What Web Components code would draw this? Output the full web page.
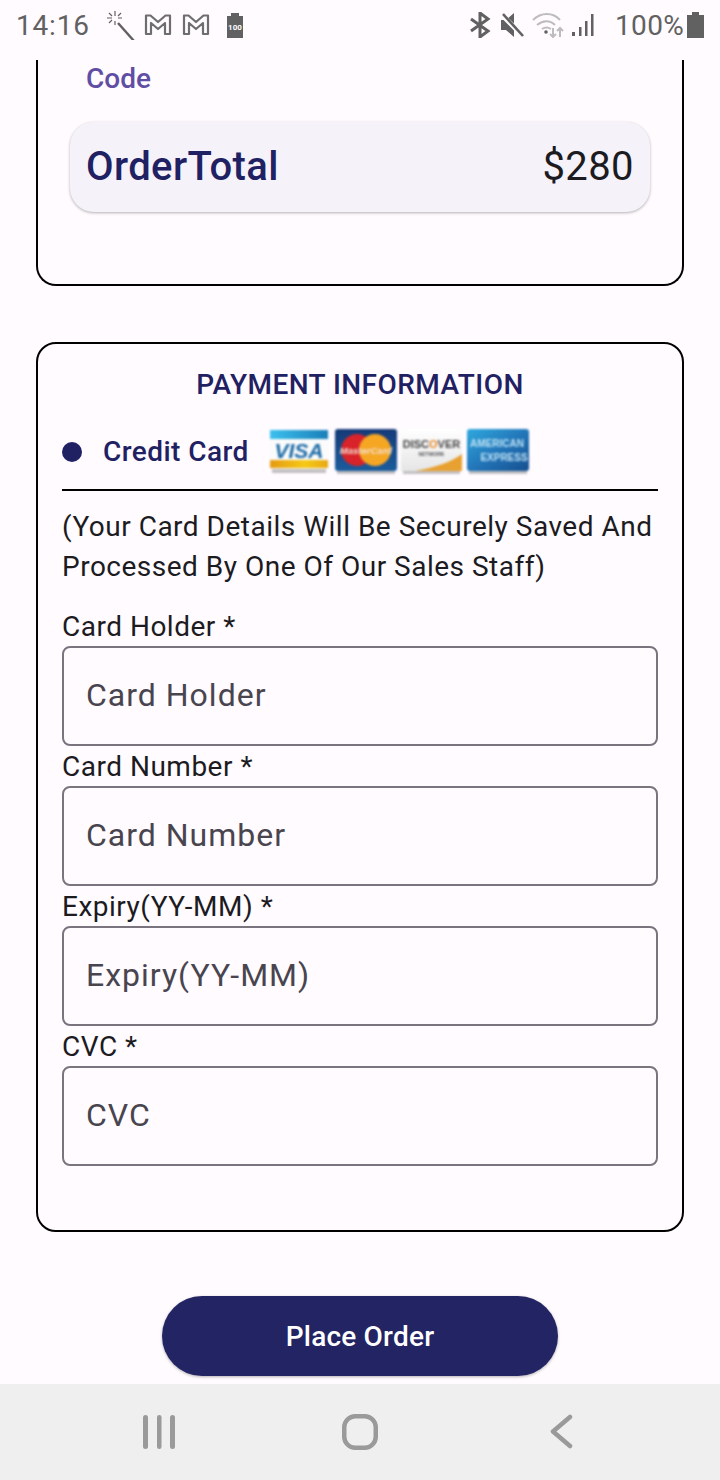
<!DOCTYPE html>
<html>
<head>
<meta charset="utf-8">
<style>
  html, body { margin: 0; padding: 0; }
  body { width: 720px; height: 1480px; overflow: hidden; background: #fffbff; font-family: Roboto, sans-serif; display: flex; flex-direction: column; }
</style>
</head>
<body>
<status-bar></status-bar>
<checkout-page>
  <section-card slot="top" class="cut">
    <span style="display:block;margin:1px 0 0 16px;font-size:28px;font-weight:500;line-height:36px;color:#5f4ea3">Code</span>
    <order-total style="margin-top:25px"></order-total>
  </section-card>
  <payment-card slot="payment"></payment-card>
  <place-button slot="action">Place Order</place-button>
</checkout-page>
<nav-bar></nav-bar>

<script>
class StatusBar extends HTMLElement {
  connectedCallback() {
    this.attachShadow({ mode: 'open' }).innerHTML = `
      <style>
        :host { display: flex; height: 60px; flex: none; align-items: center; padding: 0 16px 10px 16px; box-sizing: border-box; color: #616161; font: 400 28px Roboto, sans-serif; }
        .time { letter-spacing: .8px; width: 88px; }
        .left, .right { display: flex; align-items: center; }
        .spacer { flex: 1; }
        svg { display: block; }
      </style>
      <span class="time">14:16</span>
      <div class="left">
        <svg width="30" height="30" viewBox="0 0 30 30" style="margin-left:1px" fill="none" stroke="#616161">
          <path d="M13 13 L29 31" stroke-width="2.4"/>
          <path d="M10 1v5M10 11v4M2 8h5M13 8h4M4 3l3 3M16 3l-3 3M4 13l3-3" stroke-width="1.2"/>
        </svg>
        <svg width="28" height="24" viewBox="0 0 28 24" style="margin-left:9px" fill="none" stroke="#6e6e6e" stroke-width="2.2" stroke-linejoin="round">
          <path d="M2 2.5h4.5L14 9l7.500-6.500H26V21h-5V10l-7 6-7-6v11H2z"/>
        </svg>
        <svg width="28" height="24" viewBox="0 0 28 24" style="margin-left:10px" fill="none" stroke="#6e6e6e" stroke-width="2.2" stroke-linejoin="round">
          <path d="M2 2.5h4.500L14 9l7.500-6.500H26V21h-5V10l-7 6-7-6v11H2z"/>
        </svg>
        <svg width="18" height="26" viewBox="0 0 18 26" style="margin-left:16px">
          <path d="M1 4h4V1h8v3h4v22H1z" fill="#616161"/>
          <text x="9" y="18" text-anchor="middle" font-size="8" font-weight="700" font-family="Roboto" fill="#fff">100</text>
        </svg>
      </div>
      <div class="spacer"></div>
      <div class="right">
        <svg width="22" height="26" viewBox="0 0 22 26" fill="none" stroke="#616161" stroke-width="3">
          <path d="M2 7l17 12-8 6V1l8 6L2 19"/>
        </svg>
        <svg width="24" height="26" viewBox="0 0 24 26" style="margin-left:9px">
          <path d="M1 8h5l8-7v24l-8-7H1z" fill="#616161"/>
          <path d="M2 3l21 21" stroke="#fffbff" stroke-width="5"/>
          <path d="M3 2l20 22" stroke="#616161" stroke-width="2.600"/>
        </svg>
        <svg width="32" height="26" viewBox="0 0 32 26" style="margin-left:8px" fill="none" stroke="#bdbdbd" stroke-width="2">
          <path d="M1 8c8-8 20-8 27 0M5 13c6-5 13-5 18 0M10 17c3-2 6-2 9 0"/>
          <circle cx="14" cy="20" r="1.800" fill="#616161" stroke="none"/>
          <path d="M21 16v9M18 22l3 3 3-3" stroke-width="2"/>
          <path d="M28 25v-9M25 19l3-3 3 3" stroke-width="2"/>
        </svg>
        <svg width="24" height="24" viewBox="0 0 24 24" style="margin-left:7px" fill="#616161">
          <rect x="1" y="19" width="3" height="4"/><rect x="8" y="14" width="2.500" height="9"/><rect x="14" y="8" width="2.500" height="15"/><rect x="20" y="1" width="2.500" height="22"/>
        </svg>
        <span style="margin-left:20px;letter-spacing:.3px">100%</span>
        <svg width="17" height="26" viewBox="0 0 17 26" style="margin-left:3px" fill="#616161">
          <path d="M0 3h5V0h7v3h5v23H0z"/>
        </svg>
      </div>`;
  }
}
customElements.define('status-bar', StatusBar);

class CheckoutPage extends HTMLElement {
  connectedCallback() {
    this.attachShadow({ mode: 'open' }).innerHTML = `
      <style>
        :host { display: flex; flex-direction: column; align-items: center; height: 1324px; flex: none; box-sizing: border-box; overflow: hidden; }
        .gap1 { height: 56px; flex: none; }
        .gap2 { height: 64px; flex: none; }
      </style>
      <slot name="top"></slot>
      <div class="gap1"></div>
      <slot name="payment"></slot>
      <div class="gap2"></div>
      <slot name="action"></slot>`;
  }
}
customElements.define('checkout-page', CheckoutPage);

class SectionCard extends HTMLElement {
  connectedCallback() {
    this.attachShadow({ mode: 'open' }).innerHTML = `
      <style>
        :host { display: block; width: 648px; box-sizing: border-box; border: 2px solid #000; border-radius: 20px; flex: none; }
        :host(.cut) { border-top: 0; border-radius: 0 0 20px 20px; height: 226px; padding: 0 32px; }
      </style>
      <slot></slot>`;
  }
}
customElements.define('section-card', SectionCard);

class OrderTotal extends HTMLElement {
  connectedCallback() {
    this.attachShadow({ mode: 'open' }).innerHTML = `
      <style>
        :host { display: flex; justify-content: space-between; align-items: center; height: 90px; box-sizing: border-box; padding: 0 16px 2px; background: #f5f2f9; border-radius: 24px; box-shadow: 0 1px 3px rgba(0,0,0,.3); font: 40px Roboto, sans-serif; letter-spacing: .4px; }
        .name { font-weight: 500; color: #1f2163; }
        .price { color: #1c1b1f; }
      </style>
      <span class="name">OrderTotal</span><span class="price">$280</span>`;
  }
}
customElements.define('order-total', OrderTotal);

class CardLogos extends HTMLElement {
  connectedCallback() {
    this.attachShadow({ mode: 'open' }).innerHTML = `
      <style>
        :host { display: flex; gap: 4px; margin-left: 20px; }
        svg { display: block; width: 62px; height: 46px; filter: blur(.8px); }
        text { font-family: "Liberation Sans", sans-serif; }
      </style>
      <svg viewBox="0 0 62 46">
        <defs>
          <linearGradient id="vb" x1="0" x2="1"><stop offset="0" stop-color="#3cc0ee"/><stop offset="1" stop-color="#1a7fb8"/></linearGradient>
          <linearGradient id="vo" x1="0" x2="1"><stop offset="0" stop-color="#e59a14"/><stop offset=".6" stop-color="#f6c915"/><stop offset="1" stop-color="#e8a814"/></linearGradient>
        </defs>
        <rect x="1" y="1" width="58" height="38" fill="#fbfbfb"/>
        <rect x="1" y="1" width="58" height="9" fill="url(#vb)"/>
        <rect x="1" y="31" width="58" height="8" fill="url(#vo)"/>
        <rect x="3" y="40" width="54" height="4" fill="#999" opacity=".6"/>
        <text x="30" y="29" text-anchor="middle" font-size="21" font-weight="700" font-style="italic" fill="#1a6aa6">VISA</text>
      </svg>
      <svg viewBox="0 0 62 46">
        <defs><linearGradient id="mb" x2="0" y2="1"><stop offset="0" stop-color="#153a78"/><stop offset="1" stop-color="#1c5c9c"/></linearGradient></defs>
        <rect x="0" y="0" width="62" height="42" rx="3" fill="url(#mb)"/>
        <rect x="2" y="42" width="58" height="3" fill="#999" opacity=".6"/>
        <circle cx="22" cy="21" r="16" fill="#d8232a"/>
        <circle cx="40" cy="21" r="16" fill="#f5a623"/>
        <text x="31" y="24.500" text-anchor="middle" font-size="9.500" font-weight="700" font-style="italic" fill="#f5e0d0">MasterCard</text>
      </svg>
      <svg viewBox="0 0 62 46">
        <defs><linearGradient id="dg" x2="0" y2="1"><stop offset="0" stop-color="#fff"/><stop offset="1" stop-color="#e6e6e6"/></linearGradient></defs>
        <rect x="0" y="0" width="61" height="42" fill="url(#dg)"/>
        <path d="M14 42 C36 38 52 32 61 25 V42Z" fill="#e8a030"/>
        <rect x="2" y="42" width="57" height="3" fill="#999" opacity=".6"/>
        <text x="30.500" y="19" text-anchor="middle" font-size="11" font-weight="700" fill="#444">DISC<tspan fill="#e8872a">O</tspan>VER</text>
        <text x="30.500" y="27" text-anchor="middle" font-size="5" font-weight="700" fill="#555">NETWORK</text>
      </svg>
      <svg viewBox="0 0 62 46">
        <defs><linearGradient id="ab" x1="0" y1="0" x2="1" y2="1"><stop offset="0" stop-color="#2fa9dd"/><stop offset=".5" stop-color="#2377ba"/><stop offset="1" stop-color="#164f8f"/></linearGradient></defs>
        <rect x="0" y="0" width="62" height="42" rx="3" fill="url(#ab)"/>
        <rect x="2" y="42" width="58" height="3" fill="#999" opacity=".6"/>
        <text x="30" y="18" text-anchor="middle" font-size="10" font-weight="700" fill="#bfe3f5">AMERICAN</text>
        <text x="37" y="32" text-anchor="middle" font-size="10" font-weight="700" fill="#bfe3f5">EXPRESS</text>
      </svg>`;
  }
}
customElements.define('card-logos', CardLogos);

class FormField extends HTMLElement {
  connectedCallback() {
    var label = this.getAttribute('label');
    this.attachShadow({ mode: 'open' }).innerHTML = `
      <style>
        :host { display: block; }
        .label { font-size: 28px; height: 40px; line-height: 42px; color: #1c1b1f; letter-spacing: .5px; }
        .box { height: 100px; box-sizing: border-box; border: 2px solid #79747e; border-radius: 8px; padding: 0 22px 2px; display: flex; align-items: center; font-size: 32px; letter-spacing: 1px; color: #49454f; }
      </style>
      <div class="label">${label} *</div>
      <div class="box">${label}</div>`;
  }
}
customElements.define('form-field', FormField);

class PaymentCard extends HTMLElement {
  connectedCallback() {
    this.attachShadow({ mode: 'open' }).innerHTML = `
      <style>
        :host { display: block; width: 648px; height: 890px; box-sizing: border-box; border: 2px solid #000; border-radius: 20px; padding: 0 24px; flex: none; color: #1c1b1f; }
        h2 { margin: 0; padding-top: 21px; text-align: center; font-size: 28px; line-height: 40px; font-weight: 500; letter-spacing: .45px; color: #1f2163; }
        .method { display: flex; align-items: center; height: 46px; margin-top: 24px; }
        .dot { width: 20px; height: 20px; border-radius: 50%; background: #1f2163; flex: none; }
        .name { margin: 0 0 2px 21px; font-size: 28px; font-weight: 500; letter-spacing: .45px; color: #1f2163; }
        hr { margin: 14px 0 0; border: 0; height: 2px; background: #000; }
        p { margin: 16px 0 19px; font-size: 28px; line-height: 40px; letter-spacing: .5px; }
      </style>
      <h2>PAYMENT INFORMATION</h2>
      <div class="method"><span class="dot"></span><span class="name">Credit Card</span><card-logos></card-logos></div>
      <hr>
      <p>(Your Card Details Will Be Securely Saved And Processed By One Of Our Sales Staff)</p>
      <form-field label="Card Holder"></form-field>
      <form-field label="Card Number"></form-field>
      <form-field label="Expiry(YY-MM)"></form-field>
      <form-field label="CVC"></form-field>`;
  }
}
customElements.define('payment-card', PaymentCard);

class PlaceButton extends HTMLElement {
  connectedCallback() {
    this.attachShadow({ mode: 'open' }).innerHTML = `
      <style>
        :host { display: flex; width: 396px; height: 80px; flex: none; align-items: center; justify-content: center; border-radius: 40px; background: #232463; color: #fff; font: 500 28px Roboto, sans-serif; letter-spacing: .2px; box-shadow: 0 1px 3px rgba(0,0,0,.3); }
      </style>
      <slot></slot>`;
  }
}
customElements.define('place-button', PlaceButton);

class NavBar extends HTMLElement {
  connectedCallback() {
    this.attachShadow({ mode: 'open' }).innerHTML = `
      <style>
        :host { display: flex; height: 96px; flex: none; background: #efefef; align-items: center; padding: 0 0 0 142px; box-sizing: border-box; }
        svg { display: block; }
      </style>
      <svg width="34" height="36" viewBox="0 0 34 36" fill="#9a9a9a">
        <rect x="1" y="1" width="5" height="34" rx="2.500"/><rect x="15" y="1" width="4.500" height="34" rx="2.200"/><rect x="28" y="1" width="5" height="34" rx="2.500"/>
      </svg>
      <svg width="36" height="36" viewBox="0 0 36 36" style="margin-left:166px" fill="none" stroke="#9a9a9a" stroke-width="4.500">
        <rect x="2.250" y="2.250" width="31.500" height="31.500" rx="11"/>
      </svg>
      <svg width="24" height="36" viewBox="0 0 24 36" style="margin-left:172px" fill="none" stroke="#9a9a9a" stroke-width="4.500" stroke-linecap="round" stroke-linejoin="round">
        <path d="M20 3L3 17.500 20 32"/>
      </svg>`;
  }
}
customElements.define('nav-bar', NavBar);
</script>
</body>
</html>
